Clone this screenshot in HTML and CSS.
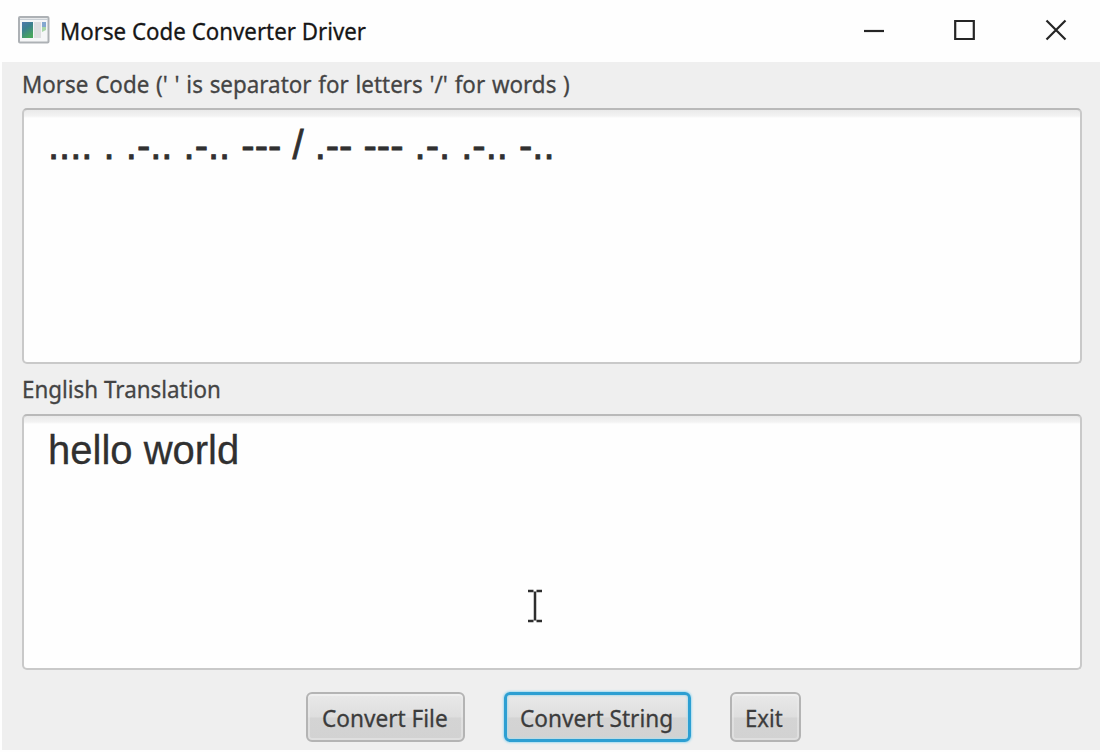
FILE: index.html
```html
<!DOCTYPE html>
<html lang="en">
<head>
<meta charset="utf-8">
<title>Morse Code Converter Driver</title>
<link rel="stylesheet" href="styles.css">
</head>
<body>
<div class="window">
  <header class="titlebar">
    <svg class="app-icon" width="32" height="28" viewBox="0 0 32 28">
      <defs><linearGradient id="g" x1="0" y1="0" x2=".5" y2="1"><stop offset="0" stop-color="#5078ac"/><stop offset=".45" stop-color="#3c8090"/><stop offset="1" stop-color="#48a55e"/></linearGradient></defs>
      <rect x="1" y="1" width="29.5" height="25.5" rx="1" fill="#f5f6f7" stroke="#adb1b5" stroke-width="2"/>
      <path d="M2 3.3H30" stroke="#c5cbd1" stroke-width="1.2"/>
      <rect x="4" y="6" width="11" height="16" fill="url(#g)"/>
      <rect x="16" y="6" width="7" height="16" fill="#dedfe1"/>
      <rect x="24" y="6" width="4" height="5" fill="#84a8cf"/>
      <path d="M24 11h4v3l-4 2z" fill="#a9d7a8"/>
    </svg>
    <h1 class="title"><span>Morse Code Converter Driver</span></h1>
    <div class="controls">
      <svg width="22" height="22" viewBox="0 0 22 22"><path d="M1 12H21"/></svg>
      <svg width="22" height="22" viewBox="0 0 22 22"><path d="M1.2 2H19.8V20H1.2Z"/></svg>
      <svg width="22" height="22" viewBox="0 0 22 22"><path d="M1.5 1.5L20.5 20.5M20.5 1.5L1.5 20.5"/></svg>
    </div>
  </header>
  <main class="content">
    <div class="label morse-label"><span>Morse Code (' ' is separator for letters '/' for words )</span></div>
    <div class="area morse">.... . .-.. .-.. --- / .-- --- .-. .-.. -..</div>
    <div class="label english-label"><span>English Translation</span></div>
    <div class="area english">hello world</div>
    <div class="buttons">
      <button class="btn file"><span>Convert File</span></button>
      <button class="btn string"><span>Convert String</span></button>
      <button class="btn exit"><span>Exit</span></button>
    </div>
  </main>
  <svg class="cursor" width="18" height="34" viewBox="0 0 18 34"><path d="M2 2H7.5M10.5 2H16M9 2.5V31.5M2 32H7.5M10.5 32H16"/></svg>
</div>
</body>
</html>
```
FILE: styles.css
```css
* { box-sizing: border-box; }
body { margin: 0; background: #fefefe; }
.window {
  position: relative;
  width: 1100px;
  height: 752px;
  padding: 0 0 2px 2px;
  overflow: hidden;
  font-family: "Noto Sans", sans-serif;
  font-size: 24px;
  -webkit-text-stroke: 0.3px currentColor;
}
.titlebar { display: flex; align-items: center; height: 62px; padding: 0 33px 2px 16px; }
.app-icon { flex: none; }
.title { flex: 1; margin: 2px 0 0 10px; font-size: 24px; font-weight: 400; line-height: 34px; color: #161616; white-space: nowrap; }
.title span, .label span, .btn span { display: inline-block; transform-origin: 0 50%; white-space: nowrap; }
.title span { transform: scaleX(.929); }
.controls { display: flex; gap: 69px; }
.controls svg { fill: none; stroke: #252525; stroke-width: 2.2; }
.content { height: 688px; padding: 0 18px 0 20px; background: #efefef; }
.label { height: 46px; line-height: 43px; color: #444; }
.label span { transform: scaleX(.933); }
.morse-label span { word-spacing: 1px; }
.english-label { height: 50px; line-height: 50px; }
.area {
  height: 256px;
  padding: 11px 24px;
  border: 2px solid #c9c9c9;
  border-top-color: #b9b9b9;
  border-radius: 5px;
  background: linear-gradient(#eaeaea, #f3f3f3 6px, #fefefe 8px);
  color: #303030;
  font: 40px/48px "Liberation Sans", Arial, sans-serif;
}
.morse { -webkit-text-stroke-width: 0.8px; }
.english { padding-top: 10px; }
.buttons { display: flex; gap: 39px; margin-top: 22px; padding-left: 284px; }
.btn {
  height: 50px;
  padding: 0 0 0 13px;
  border: 2px solid #b4b4b4;
  border-radius: 6px;
  background: linear-gradient(#e9e9e9, #dedede 50%, #d4d4d4 52%, #d2d2d2);
  box-shadow: inset 0 0 0 2px #eaeaea88, inset 0 2px 0 #f5f5f5;
  color: #3c3c3c;
  font: 24px/45px "Noto Sans", sans-serif;
  text-align: left;
  -webkit-text-stroke: 0.3px currentColor;
}
.btn span { transform: scaleX(.942); }
.file { width: 159px; padding-left: 14px; }
.string { width: 187px; border: 3px solid #2d9fd2; box-shadow: 0 0 2px 1px #a6dcf0, inset 0 0 2px 1px #b5dce9; padding-left: 13px; line-height: 43px; }
.exit { width: 71px; }
.exit span { transform: scaleX(.92); }
.cursor { position: absolute; left: 526px; top: 589px; fill: none; stroke: #2e2e2e; stroke-width: 2.5; }
```
